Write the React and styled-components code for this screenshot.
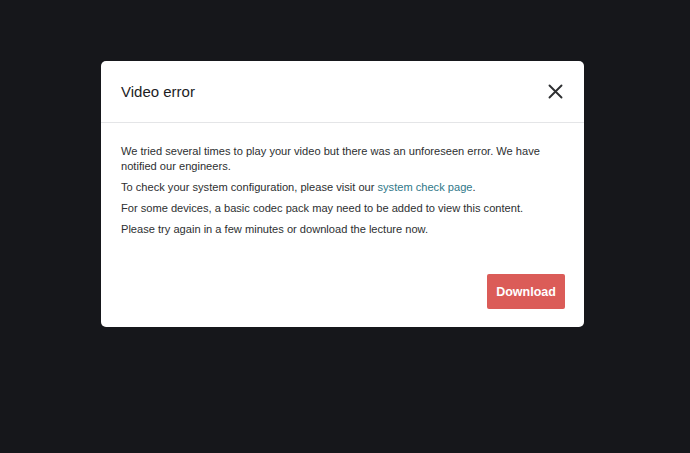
import React from "react";
import styled, { createGlobalStyle } from "styled-components";

const GlobalStyle = createGlobalStyle`
  html, body {
    margin: 0;
    padding: 0;
    background: #16171b;
    font-family: "Liberation Sans", Arial, sans-serif;
  }
`;

const Backdrop = styled.div`
  width: 690px;
  height: 453px;
  background: #16171b;
  padding: 61px 0 0 101px;
  box-sizing: border-box;
  display: flex;
  align-items: flex-start;
`;

const Modal = styled.div`
  width: 483px;
  height: 266px;
  background: #ffffff;
  border-radius: 5px;
  display: flex;
  flex-direction: column;
  box-sizing: border-box;
`;

const Header = styled.div`
  height: 62px;
  border-bottom: 1px solid #e4e5e7;
  display: flex;
  align-items: center;
  justify-content: space-between;
  padding: 0 20px 1px 20px;
  box-sizing: border-box;
`;

const Title = styled.h2`
  margin: 0;
  font-size: 15px;
  font-weight: 400;
  color: #1c1d1f;
`;

const CloseButton = styled.button`
  border: 0;
  background: none;
  padding: 0;
  width: 18px;
  height: 18px;
  display: flex;
  align-items: center;
  justify-content: center;
  cursor: pointer;
`;

const Body = styled.div`
  flex: 1;
  padding: 21px 19px 18px 20px;
  display: flex;
  flex-direction: column;
`;

const Text = styled.p`
  margin: 0 0 6px 0;
  font-size: 11.1px;
  line-height: 15px;
  color: #2d2f31;
`;

const Link = styled.a`
  color: #2f7889;
  text-decoration: none;
`;

const Footer = styled.div`
  margin-top: auto;
  display: flex;
  justify-content: flex-end;
`;

const DownloadButton = styled.button`
  width: 78px;
  height: 35px;
  border: 0;
  border-radius: 2px;
  background: #db5c58;
  color: #ffffff;
  font-family: "Liberation Sans", Arial, sans-serif;
  font-size: 12.5px;
  font-weight: 700;
  cursor: pointer;
`;

export default function App() {
  return (
    <>
      <GlobalStyle />
      <Backdrop>
        <Modal>
          <Header>
            <Title>Video error</Title>
            <CloseButton aria-label="Close">
              <svg width="15" height="15" viewBox="0 0 15 15">
                <path d="M1.5 1.5 L13.5 13.5 M13.5 1.5 L1.5 13.5" stroke="#2d2f31" strokeWidth="1.9" strokeLinecap="round" />
              </svg>
            </CloseButton>
          </Header>
          <Body>
            <Text>
              We tried several times to play your video but there was an unforeseen error. We have notified our engineers.
            </Text>
            <Text>
              To check your system configuration, please visit our <Link href="#">system check page</Link>.
            </Text>
            <Text>For some devices, a basic codec pack may need to be added to view this content.</Text>
            <Text>Please try again in a few minutes or download the lecture now.</Text>
            <Footer>
              <DownloadButton>Download</DownloadButton>
            </Footer>
          </Body>
        </Modal>
      </Backdrop>
    </>
  );
}
